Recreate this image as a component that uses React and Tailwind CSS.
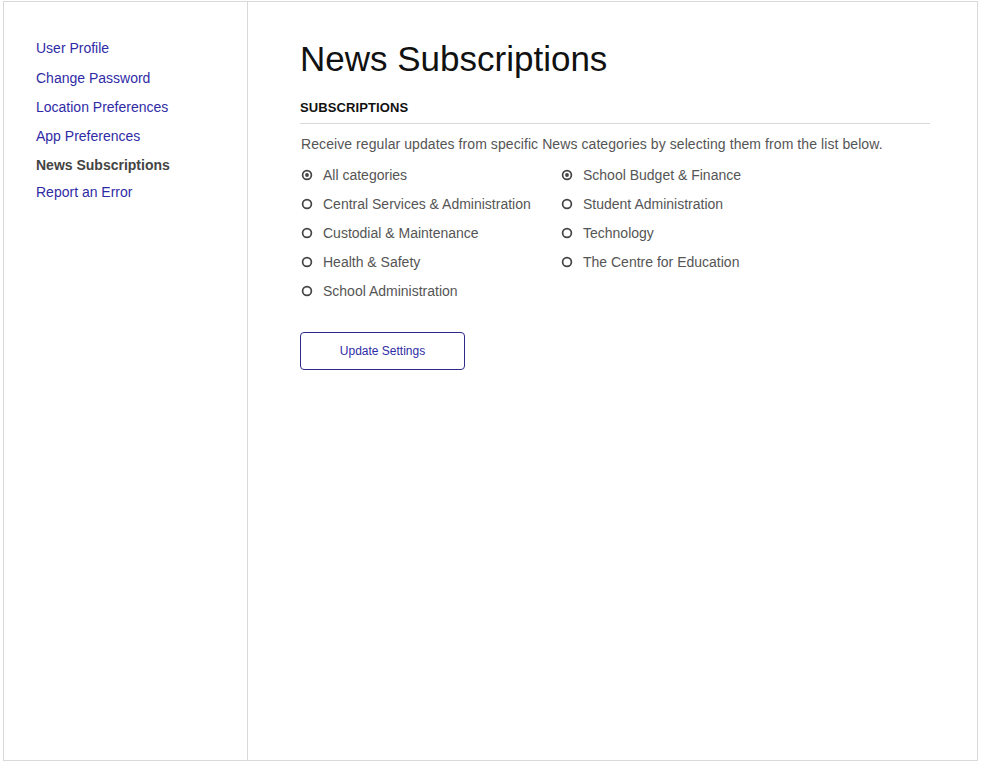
const links = [
  { label: "User Profile" },
  { label: "Change Password" },
  { label: "Location Preferences" },
  { label: "App Preferences" },
  { label: "News Subscriptions", active: true },
  { label: "Report an Error" },
];

const left = [
  { label: "All categories", checked: true },
  { label: "Central Services & Administration" },
  { label: "Custodial & Maintenance" },
  { label: "Health & Safety" },
  { label: "School Administration" },
];

const right = [
  { label: "School Budget & Finance", checked: true },
  { label: "Student Administration" },
  { label: "Technology" },
  { label: "The Centre for Education" },
];

function Radio({ checked }) {
  return (
    <svg width="12" height="12" viewBox="0 0 12 12" className="shrink-0">
      <circle cx="6" cy="6" r="4.4" fill="none" stroke="#444" strokeWidth="1.7" />
      {checked && <circle cx="6" cy="6" r="1.9" fill="#444" />}
    </svg>
  );
}

function Option({ label, checked }) {
  return (
    <label className="flex items-center gap-[10px] pl-[1px] h-[20px] text-[14px] text-[#555] cursor-pointer">
      <Radio checked={checked} />
      <span>{label}</span>
    </label>
  );
}

export default function App() {
  return (
    <div className="pt-[1px] pl-[3px] bg-white" style={{ fontFamily: '"Liberation Sans", Arial, sans-serif' }}>
      <div className="w-[975px] h-[760px] border border-[#d9d9d9] flex">
        <aside className="w-[244px] border-r border-[#d9d9d9] pt-[36px] pl-[32px]">
          <nav className="flex flex-col gap-[9px]">
            {links.map((l, i) => (
              <a
                key={l.label}
                href="#"
                className={
                  "block h-[20px] leading-[20px] text-[14px] " +
                  (l.active ? "font-bold text-[#444]" : "text-[#2f2ba6]") +
                  (i === 0 ? " mb-[1px]" : "") +
                  (i === 5 ? " -mt-[2px]" : "")
                }
              >
                {l.label}
              </a>
            ))}
          </nav>
        </aside>

        <main className="flex-1 pl-[52px] pr-[47px] pt-[37px]">
          <h1 className="text-[35px] leading-[40px] text-[#111]">News Subscriptions</h1>

          <h2 className="mt-[21px] text-[13px] leading-[16px] font-bold tracking-[0.1px] text-[#111] pb-[7px] border-b border-[#d9d9d9]">
            SUBSCRIPTIONS
          </h2>

          <p className="mt-[10px] text-[14px] leading-[20px] tracking-[0.08px] text-[#555] pl-[1px]">
            Receive regular updates from specific News categories by selecting them from the list below.
          </p>

          <div className="mt-[11px] flex">
            <div className="w-[260px] flex flex-col gap-[9px]">
              {left.map((o) => (
                <Option key={o.label} {...o} />
              ))}
            </div>
            <div className="flex flex-col gap-[9px]">
              {right.map((o) => (
                <Option key={o.label} {...o} />
              ))}
            </div>
          </div>

          <button className="mt-[31px] w-[165px] h-[38px] border border-[#2d2a8a] rounded-[4px] text-[12px] text-[#2f2ba6] bg-white">
            Update Settings
          </button>
        </main>
      </div>
    </div>
  );
}
